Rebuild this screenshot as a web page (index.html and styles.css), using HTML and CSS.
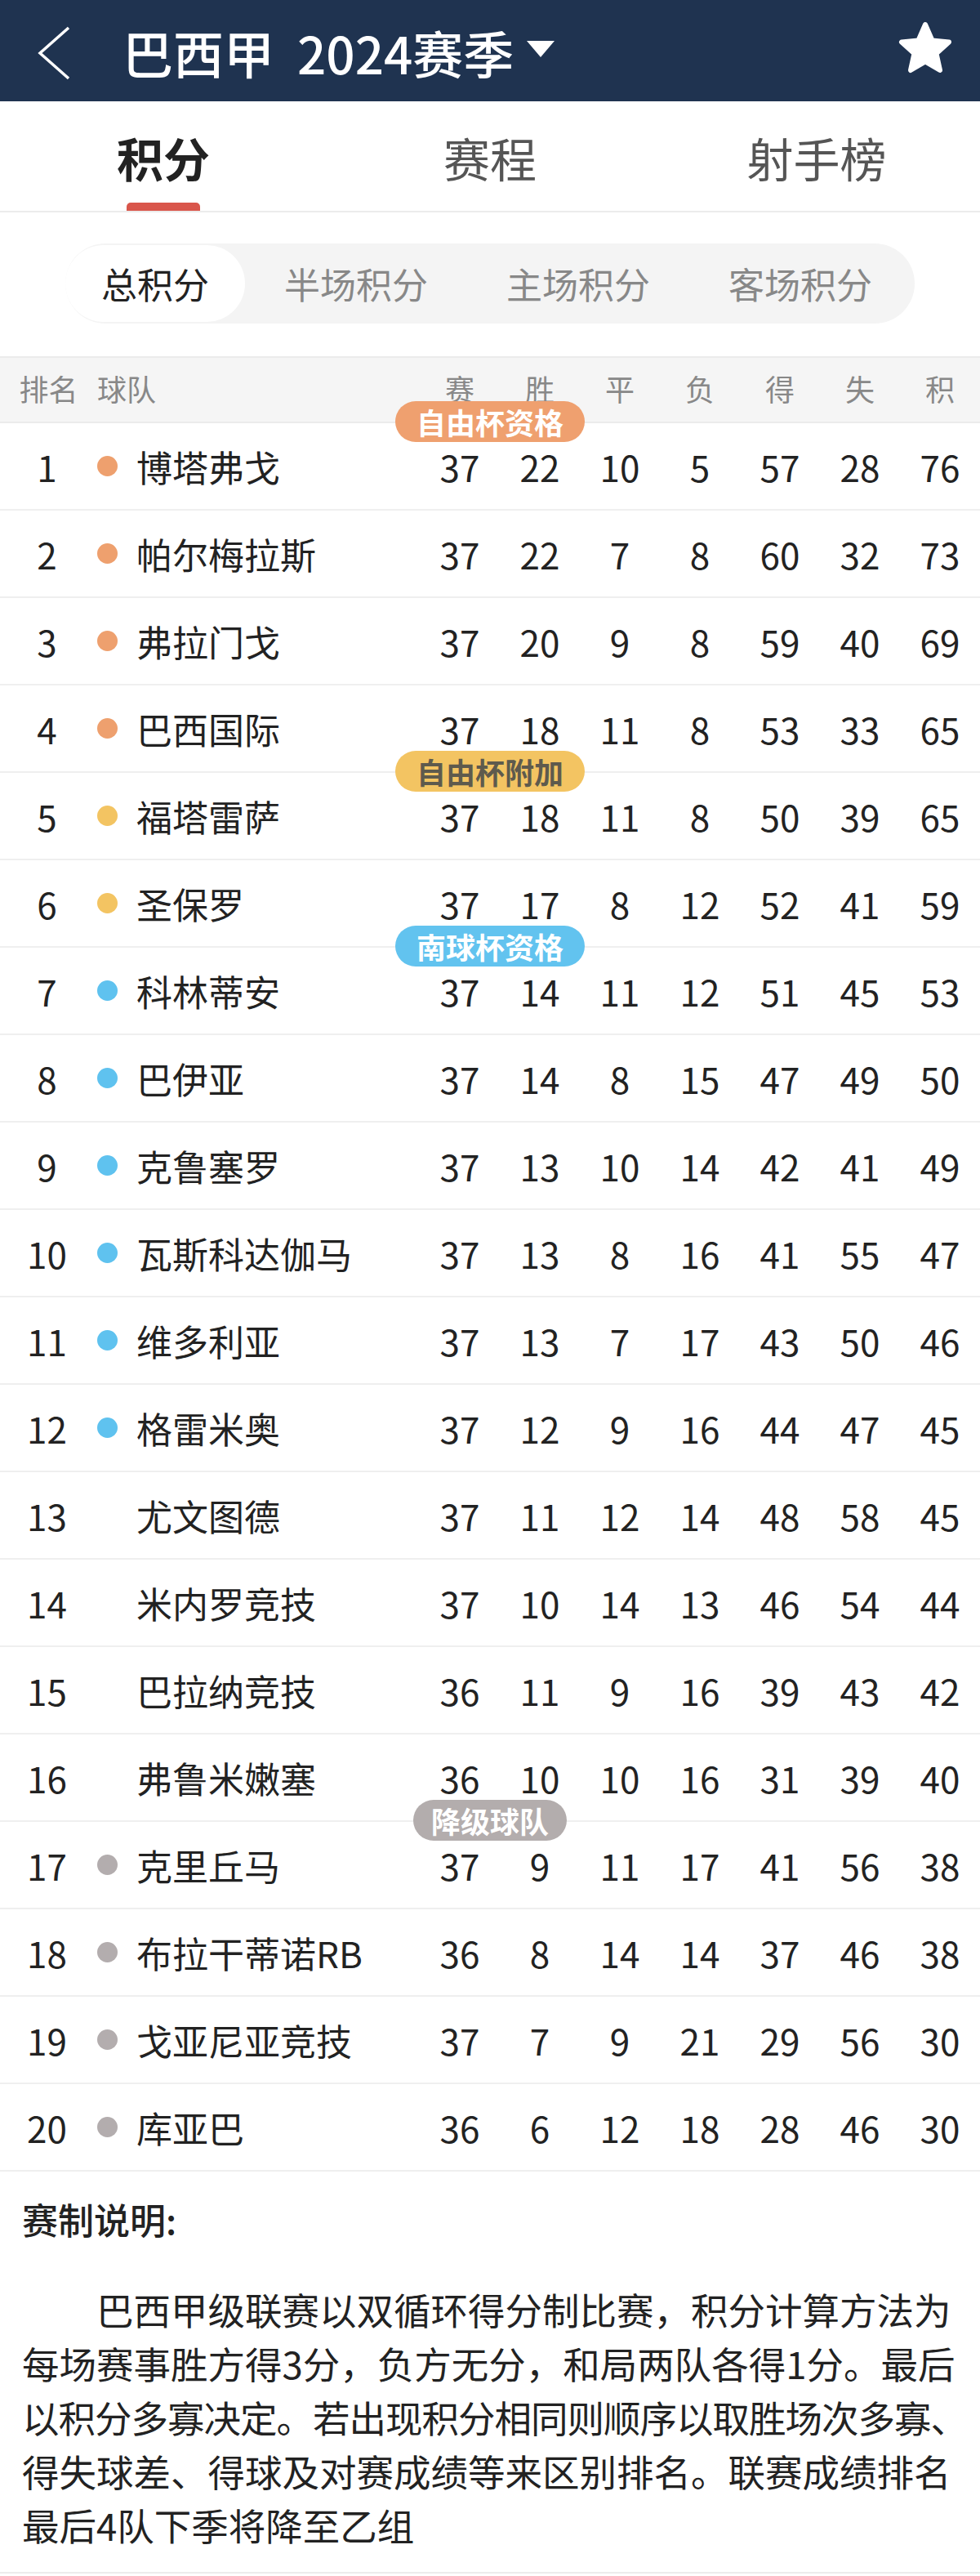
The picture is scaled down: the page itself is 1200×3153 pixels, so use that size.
FILE: index.html
```html
<!DOCTYPE html>
<html lang="zh-CN">
<head>
<meta charset="utf-8">
<title>巴西甲 2024赛季</title>
<link rel="stylesheet" href="styles.css">
</head>
<body>
<header class="topbar">
  <svg class="back" width="40" height="66" viewBox="0 0 40 66"><polyline points="38,2 3,33 38,64" fill="none" stroke="#fff" stroke-width="3.5" stroke-linejoin="miter"/></svg>
  <div class="title">巴西甲 2024赛季</div>
  <svg class="caret" width="34" height="22" viewBox="0 0 34 22"><polygon points="0,1 34,1 17,21" fill="#fff"/></svg>
  <svg class="star" width="70" height="68" viewBox="0 0 70 68"><path d="M35 5 L43.5 24.5 L64 26.5 L48.5 40.5 L53 61 L35 50.5 L17 61 L21.5 40.5 L6 26.5 L26.5 24.5 Z" fill="#fff" stroke="#fff" stroke-width="6" stroke-linejoin="round"/></svg>
</header>

<nav class="tabs">
  <div class="tab active">积分<span class="bar"></span></div>
  <div class="tab">赛程</div>
  <div class="tab">射手榜</div>
</nav>

<section class="segwrap">
  <div class="seg">
    <div class="segitem on">总积分</div>
    <div class="segitem">半场积分</div>
    <div class="segitem">主场积分</div>
    <div class="segitem">客场积分</div>
  </div>
</section>

<div class="table">
  <div class="row head">
    <div class="rank">排名</div>
    <div class="team">球队</div>
    <div class="c">赛</div><div class="c">胜</div><div class="c">平</div><div class="c">负</div><div class="c">得</div><div class="c">失</div><div class="c">积</div>
  </div>

  <div class="row"><span class="badge b-orange">自由杯资格</span><div class="rank">1</div><div class="team"><i class="dot orange"></i>博塔弗戈</div><div class="c">37</div><div class="c">22</div><div class="c">10</div><div class="c">5</div><div class="c">57</div><div class="c">28</div><div class="c">76</div></div>
  <div class="row"><div class="rank">2</div><div class="team"><i class="dot orange"></i>帕尔梅拉斯</div><div class="c">37</div><div class="c">22</div><div class="c">7</div><div class="c">8</div><div class="c">60</div><div class="c">32</div><div class="c">73</div></div>
  <div class="row"><div class="rank">3</div><div class="team"><i class="dot orange"></i>弗拉门戈</div><div class="c">37</div><div class="c">20</div><div class="c">9</div><div class="c">8</div><div class="c">59</div><div class="c">40</div><div class="c">69</div></div>
  <div class="row"><div class="rank">4</div><div class="team"><i class="dot orange"></i>巴西国际</div><div class="c">37</div><div class="c">18</div><div class="c">11</div><div class="c">8</div><div class="c">53</div><div class="c">33</div><div class="c">65</div></div>
  <div class="row"><span class="badge b-yellow">自由杯附加</span><div class="rank">5</div><div class="team"><i class="dot yellow"></i>福塔雷萨</div><div class="c">37</div><div class="c">18</div><div class="c">11</div><div class="c">8</div><div class="c">50</div><div class="c">39</div><div class="c">65</div></div>
  <div class="row"><div class="rank">6</div><div class="team"><i class="dot yellow"></i>圣保罗</div><div class="c">37</div><div class="c">17</div><div class="c">8</div><div class="c">12</div><div class="c">52</div><div class="c">41</div><div class="c">59</div></div>
  <div class="row"><span class="badge b-blue">南球杯资格</span><div class="rank">7</div><div class="team"><i class="dot blue"></i>科林蒂安</div><div class="c">37</div><div class="c">14</div><div class="c">11</div><div class="c">12</div><div class="c">51</div><div class="c">45</div><div class="c">53</div></div>
  <div class="row"><div class="rank">8</div><div class="team"><i class="dot blue"></i>巴伊亚</div><div class="c">37</div><div class="c">14</div><div class="c">8</div><div class="c">15</div><div class="c">47</div><div class="c">49</div><div class="c">50</div></div>
  <div class="row"><div class="rank">9</div><div class="team"><i class="dot blue"></i>克鲁塞罗</div><div class="c">37</div><div class="c">13</div><div class="c">10</div><div class="c">14</div><div class="c">42</div><div class="c">41</div><div class="c">49</div></div>
  <div class="row"><div class="rank">10</div><div class="team"><i class="dot blue"></i>瓦斯科达伽马</div><div class="c">37</div><div class="c">13</div><div class="c">8</div><div class="c">16</div><div class="c">41</div><div class="c">55</div><div class="c">47</div></div>
  <div class="row"><div class="rank">11</div><div class="team"><i class="dot blue"></i>维多利亚</div><div class="c">37</div><div class="c">13</div><div class="c">7</div><div class="c">17</div><div class="c">43</div><div class="c">50</div><div class="c">46</div></div>
  <div class="row"><div class="rank">12</div><div class="team"><i class="dot blue"></i>格雷米奥</div><div class="c">37</div><div class="c">12</div><div class="c">9</div><div class="c">16</div><div class="c">44</div><div class="c">47</div><div class="c">45</div></div>
  <div class="row"><div class="rank">13</div><div class="team"><i class="dot none"></i>尤文图德</div><div class="c">37</div><div class="c">11</div><div class="c">12</div><div class="c">14</div><div class="c">48</div><div class="c">58</div><div class="c">45</div></div>
  <div class="row"><div class="rank">14</div><div class="team"><i class="dot none"></i>米内罗竞技</div><div class="c">37</div><div class="c">10</div><div class="c">14</div><div class="c">13</div><div class="c">46</div><div class="c">54</div><div class="c">44</div></div>
  <div class="row"><div class="rank">15</div><div class="team"><i class="dot none"></i>巴拉纳竞技</div><div class="c">36</div><div class="c">11</div><div class="c">9</div><div class="c">16</div><div class="c">39</div><div class="c">43</div><div class="c">42</div></div>
  <div class="row"><div class="rank">16</div><div class="team"><i class="dot none"></i>弗鲁米嫩塞</div><div class="c">36</div><div class="c">10</div><div class="c">10</div><div class="c">16</div><div class="c">31</div><div class="c">39</div><div class="c">40</div></div>
  <div class="row"><span class="badge b-grey">降级球队</span><div class="rank">17</div><div class="team"><i class="dot grey"></i>克里丘马</div><div class="c">37</div><div class="c">9</div><div class="c">11</div><div class="c">17</div><div class="c">41</div><div class="c">56</div><div class="c">38</div></div>
  <div class="row"><div class="rank">18</div><div class="team"><i class="dot grey"></i>布拉干蒂诺RB</div><div class="c">36</div><div class="c">8</div><div class="c">14</div><div class="c">14</div><div class="c">37</div><div class="c">46</div><div class="c">38</div></div>
  <div class="row"><div class="rank">19</div><div class="team"><i class="dot grey"></i>戈亚尼亚竞技</div><div class="c">37</div><div class="c">7</div><div class="c">9</div><div class="c">21</div><div class="c">29</div><div class="c">56</div><div class="c">30</div></div>
  <div class="row"><div class="rank">20</div><div class="team"><i class="dot grey"></i>库亚巴</div><div class="c">36</div><div class="c">6</div><div class="c">12</div><div class="c">18</div><div class="c">28</div><div class="c">46</div><div class="c">30</div></div>
</div>

<section class="rules">
  <div class="rules-title">赛制说明:</div>
  <p class="rules-text">巴西甲级联赛以双循环得分制比赛，积分计算方法为<br>每场赛事胜方得3分，负方无分，和局两队各得1分。最后<br><span class="tight">以积分多寡决定。若出现积分相同则顺序以取胜场次多寡、</span><br>得失球差、得球及对赛成绩等来区别排名。联赛成绩排名<br>最后4队下季将降至乙组</p>
</section>
</body>
</html>
```

FILE: styles.css
```css
* { box-sizing: border-box; }
html, body { margin: 0; padding: 0; }
body {
  width: 1200px;
  background: #fff;
  font-family: "Noto Sans CJK SC", "Noto Sans", sans-serif;
  color: #222;
}

.topbar {
  height: 124px;
  background: #1f3350;
  display: flex;
  align-items: center;
  padding-left: 46px;
  padding-right: 32px;
}
.back { flex: none; margin-top: 6px; }
.title {
  margin-left: 64px;
  color: #fff;
  font-size: 62px;
  line-height: 1;
  font-weight: 500;
  word-spacing: 14px;
  margin-top: 4px;
  white-space: nowrap;
}
.caret { margin-left: 16px; margin-top: -4px; }
.star { margin-left: auto; margin-top: -6px; }

.tabs {
  display: grid;
  grid-template-columns: repeat(3, 1fr);
  height: 136px;
  border-bottom: 2px solid #ececec;
}
.tab {
  position: relative;
  text-align: center;
  font-size: 57px;
  line-height: 1;
  padding-top: 40px;
  color: #555;
}
.tab.active { color: #222; font-weight: 700; }
.tab .bar {
  position: absolute;
  left: 50%;
  bottom: 0;
  width: 90px;
  height: 10px;
  margin-left: -45px;
  border-radius: 5px 5px 0 0;
  background: #d9564b;
}

.segwrap {
  padding: 38px 80px 40px;
}
.seg {
  display: flex;
  height: 98px;
  background: #f4f4f4;
  border-radius: 49px;
  padding: 2px 0;
}
.segitem {
  flex: none;
  display: flex;
  align-items: center;
  justify-content: center;
  padding: 0 48px;
  font-size: 44px;
  white-space: nowrap;
  color: #888;
  border-radius: 47px;
}
.segitem.on {
  background: #fff;
  color: #222;
  padding: 0 44px;
}

.row {
  position: relative;
  display: grid;
  grid-template-columns: 115px 399px repeat(7, 98px);
  align-items: center;
  height: 107px;
  border-bottom: 2px solid #efefef;
  font-size: 44px;
  line-height: 1;
  color: #222;
}
.row.head {
  height: 82px;
  background: #f5f5f5;
  border-top: 2px solid #ebebeb;
  border-bottom: 2px solid #ebebeb;
  font-size: 36px;
  color: #888;
  padding-bottom: 4px;
}
.row.head .rank { padding-left: 4px; }
.rank { text-align: center; }
.team {
  display: flex;
  align-items: center;
  padding-left: 4px;
  white-space: nowrap;
}
.c { text-align: center; }

.dot {
  width: 25px;
  height: 25px;
  border-radius: 50%;
  margin-right: 23px;
  flex: none;
}
.dot.orange { background: #eea06e; }
.dot.yellow { background: #f3c462; }
.dot.blue { background: #5fc2ef; }
.dot.grey { background: #b3adae; }
.dot.none { background: transparent; }

.badge {
  position: absolute;
  left: 50%;
  top: -27px;
  transform: translateX(-50%);
  height: 50px;
  padding: 0 26px;
  border-radius: 25px;
  font-size: 36px;
  line-height: 50px;
  font-weight: 700;
  color: #fff;
  white-space: nowrap;
  z-index: 2;
}
.b-orange { background: #efa06f; }
.b-yellow { background: #f3c462; color: #5e5a4d; }
.b-blue { background: #62c3ef; }
.b-grey { background: #b3adad; padding: 0 22px; }

.rules {
  padding: 25px 20px 0 27px;
  height: 492px;
  border-bottom: 2px solid #ececec;
}
.rules-title {
  font-size: 44px;
  line-height: 66px;
  font-weight: 500;
  color: #222;
}
.rules-text {
  margin: 44px 0 0;
  font-size: 45.5px;
  line-height: 66px;
  text-indent: 2em;
  white-space: nowrap;
  color: #222;
}
.tight { letter-spacing: -1px; }
```
